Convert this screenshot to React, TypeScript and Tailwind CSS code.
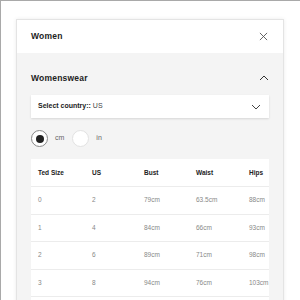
import React from "react";

const rows = [
  ["0", "2", "79cm", "63.5cm", "88cm"],
  ["1", "4", "84cm", "66cm", "93cm"],
  ["2", "6", "89cm", "71cm", "98cm"],
  ["3", "8", "94cm", "76cm", "103cm"],
];

const cols = "grid grid-cols-[54px_52px_52px_53px_1fr] pl-[7px] items-center";

export default function App() {
  return (
    <div
      className="w-[300px] h-[300px] bg-white border-t border-l border-[#a9a9a9] overflow-hidden"
      style={{ fontFamily: '"Liberation Sans", Arial, sans-serif' }}
    >
      <div className="ml-[15px] mt-[18px] w-[268px] h-[290px] border border-[#e4e4e4] shadow-[0_0_4px_rgba(0,0,0,0.08)] overflow-hidden">
        <div className="h-[33px] bg-white flex items-center justify-between px-[14px]">
          <span className="text-[8.5px] font-bold text-[#222] tracking-[0.2px]">Women</span>
          <svg width="9" height="9" viewBox="0 0 10 10" className="mr-[1px]">
            <path d="M1 1L9 9M9 1L1 9" stroke="#555" strokeWidth="1" fill="none" />
          </svg>
        </div>
        <div className="bg-[#f4f4f4] h-full px-[14px] pt-[17px]">
          <div className="h-[16px] flex items-center justify-between">
            <span className="text-[8.5px] font-bold text-[#222] tracking-[0.2px]">Womenswear</span>
            <svg width="10" height="6" viewBox="0 0 10 6">
              <path d="M1 5L5 1L9 5" stroke="#333" strokeWidth="1" fill="none" />
            </svg>
          </div>
          <div className="mt-[9px] h-[23px] bg-white shadow-[0_1px_2px_rgba(0,0,0,0.12)] flex items-center justify-between pl-[7px] pr-[8px]">
            <span className="text-[7px] text-[#444]">
              <span className="font-bold text-[#222]">Select country::</span> US
            </span>
            <svg width="10" height="6" viewBox="0 0 10 6">
              <path d="M1 1L5 5L9 1" stroke="#444" strokeWidth="1" fill="none" />
            </svg>
          </div>
          <div className="mt-[12px] flex items-center h-[17px]">
            <div className="w-[17px] h-[17px] rounded-full border border-[#888] bg-white flex items-center justify-center">
              <div className="w-[8px] h-[8px] rounded-full bg-[#222]" />
            </div>
            <span className="ml-[7px] text-[7px] text-[#666]">cm</span>
            <div className="ml-[8px] w-[17px] h-[17px] rounded-full border border-[#e2e2e2] bg-white" />
            <span className="ml-[7px] text-[7px] text-[#666]">in</span>
          </div>
          <div className="mt-[12px] bg-white">
            <div className={cols + " h-[27px] text-[6.5px] font-bold text-[#222]"}>
              <span>Ted Size</span>
              <span>US</span>
              <span>Bust</span>
              <span>Waist</span>
              <span>Hips</span>
            </div>
            {rows.map((r, i) => (
              <div
                key={i}
                className={cols + " h-[27.5px] border-t border-[#ececec] text-[6.5px] text-[#888]"}
              >
                {r.map((c, j) => (
                  <span key={j} className="whitespace-nowrap">
                    {c}
                  </span>
                ))}
              </div>
            ))}
            <div className="h-[27px] border-t border-[#ececec]" />
          </div>
        </div>
      </div>
    </div>
  );
}
